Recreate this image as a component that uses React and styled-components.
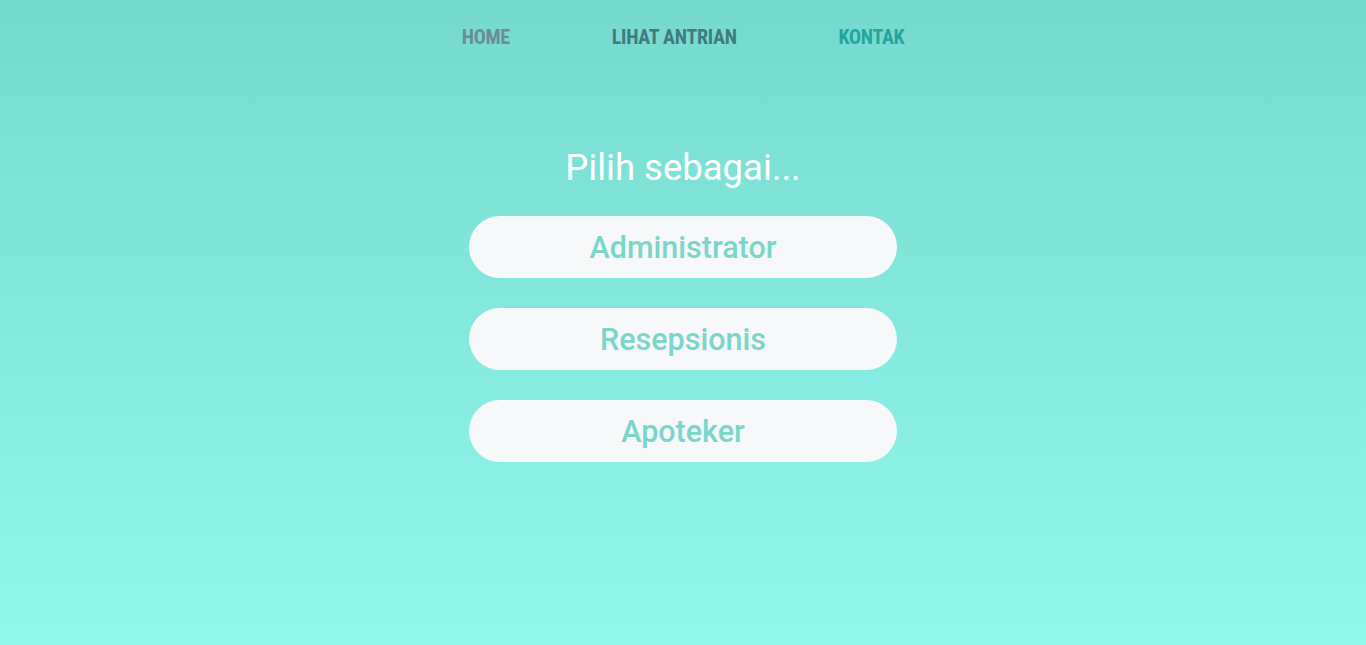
import React from 'react';
import styled, { createGlobalStyle } from 'styled-components';

const GlobalStyle = createGlobalStyle`
    html, body {
        margin: 0;
        padding: 0;
    }
    body {
        font-family: Roboto, "Liberation Sans", sans-serif;
    }
`;

const Page = styled.div`
    min-height: 100vh;
    background: linear-gradient(180deg, #76d9cf 0%, #92f8ed 100%);
    display: flex;
    flex-direction: column;
    align-items: center;
`;

const Nav = styled.nav`
    display: flex;
    gap: 102px;
    padding-top: 26px;
`;

const NavLink = styled.a`
    font-family: "Roboto Condensed", Roboto, sans-serif;
    font-weight: 700;
    font-size: 20px;
    letter-spacing: -0.3px;
    line-height: 22px;
    color: ${(props) => props.color};
    text-decoration: none;
    cursor: pointer;
`;

const Main = styled.main`
    display: flex;
    flex-direction: column;
    align-items: center;
    padding-top: 96px;
`;

const Title = styled.h1`
    margin: 0 0 24px;
    font-weight: 400;
    font-size: 36.5px;
    line-height: 48px;
    color: #ffffff;
`;

const Choices = styled.div`
    display: flex;
    flex-direction: column;
    gap: 30px;
`;

const Choice = styled.button`
    width: 428px;
    height: 62px;
    border: none;
    border-radius: 31px;
    background: #f6f8fa;
    color: #7ad6cb;
    font-family: Roboto, "Liberation Sans", sans-serif;
    font-weight: 500;
    font-size: 30.5px;
    cursor: pointer;
`;

function App() {
  return (
    <>
      <GlobalStyle />
      <Page>
        <Nav>
          <NavLink color="#6b8c9c">HOME</NavLink>
          <NavLink color="#3e7c80">LIHAT ANTRIAN</NavLink>
          <NavLink color="#27a39e">KONTAK</NavLink>
        </Nav>
        <Main>
          <Title>Pilih sebagai...</Title>
          <Choices>
            <Choice>Administrator</Choice>
            <Choice>Resepsionis</Choice>
            <Choice>Apoteker</Choice>
          </Choices>
        </Main>
      </Page>
    </>
  );
}

export default App;
